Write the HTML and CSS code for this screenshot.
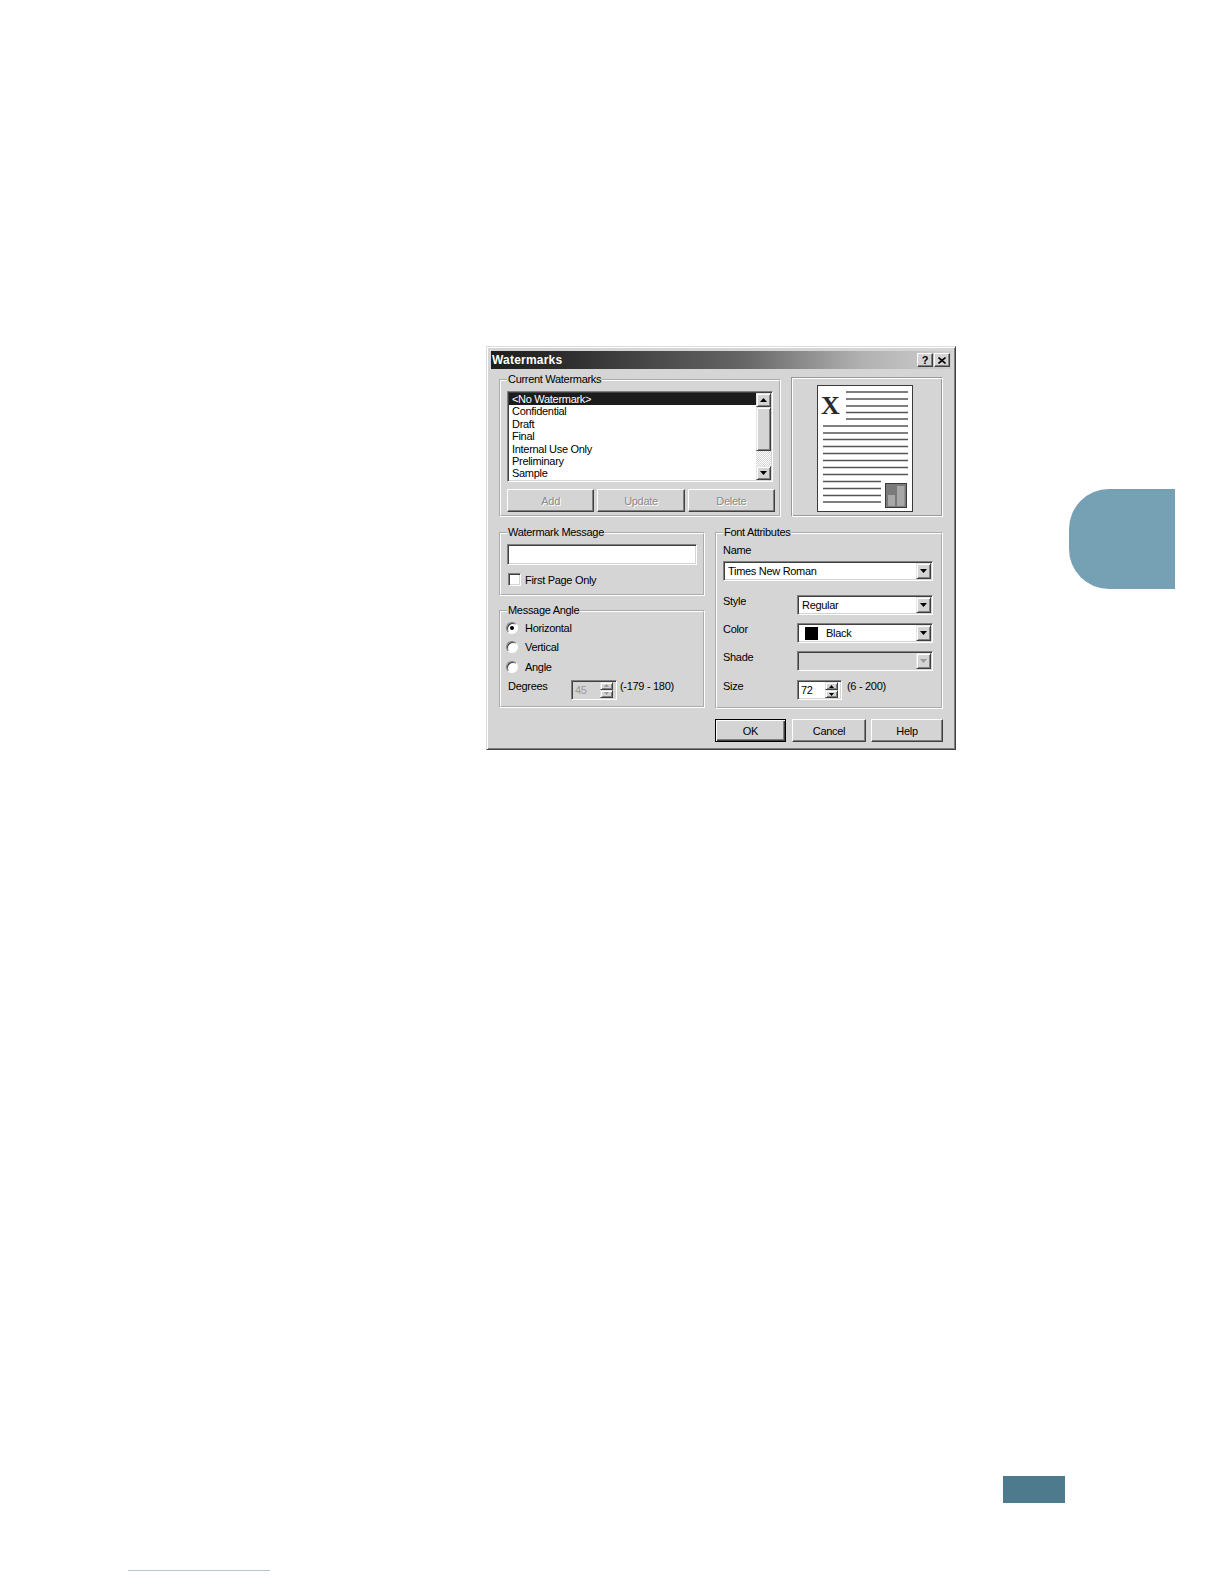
FILE: index.html
```html
<!DOCTYPE html>
<html lang="en">
<head>
  <meta charset="UTF-8">
  <title>Watermarks</title>
  <link rel="stylesheet" href="styles.css">
</head>
<body>
<div class="page">

  <div class="top-row">
    <!-- Watermarks dialog -->
    <div class="dialog">
      <div class="titlebar">
        <span class="title">Watermarks</span>
        <div class="title-btns">
          <span class="tbtn">?</span>
          <span class="tbtn"><svg width="8" height="7" viewBox="0 0 8 7"><path d="M0.5 0.5L7.5 6.5M7.5 0.5L0.5 6.5" stroke="#000" stroke-width="1.6"/></svg></span>
        </div>
      </div>

      <div class="dlg-body">
        <div class="row-one">
          <fieldset class="grp grp-current">
            <legend>Current Watermarks</legend>
            <div class="listbox">
              <ul class="items">
                <li class="sel">&lt;No Watermark&gt;</li>
                <li>Confidential</li>
                <li>Draft</li>
                <li>Final</li>
                <li>Internal Use Only</li>
                <li>Preliminary</li>
                <li>Sample</li>
              </ul>
              <div class="vscroll">
                <div class="sbtn"><svg width="7" height="4" viewBox="0 0 7 4"><path d="M3.5 0L7 4H0z"/></svg></div>
                <div class="thumb"></div>
                <div class="track"></div>
                <div class="sbtn"><svg width="7" height="4" viewBox="0 0 7 4"><path d="M0 0h7L3.5 4z"/></svg></div>
              </div>
            </div>
            <div class="btn-row">
              <div class="btn disabled">Add</div>
              <div class="btn disabled">Update</div>
              <div class="btn disabled">Delete</div>
            </div>
          </fieldset>

          <div class="preview">
            <div class="paper">
              <svg width="94" height="125" viewBox="0 0 94 125">
                <text x="3" y="28" font-family="Liberation Serif" font-weight="bold" font-size="26" fill="#2a2a2a">X</text>
                <g stroke="#555" stroke-width="1.4">
                  <path d="M28 6H90M28 13H90M28 20H90M28 26.5H90M28 33H90"/>
                  <path d="M5 40H90M5 47H90M5 53.5H90M5 60.5H90M5 67.5H90M5 74.5H90M5 81.5H90M5 88.5H90"/>
                  <path d="M5 95.5H63M5 102.5H63M5 109.5H63M5 116H63"/>
                </g>
                <rect x="67.5" y="97.5" width="21" height="24" fill="#7a7a7a" stroke="#3a3a3a"/>
                <rect x="70" y="109" width="7" height="11" fill="#a8a8a8"/>
                <rect x="79" y="100" width="7.5" height="20" fill="#a8a8a8"/>
              </svg>
            </div>
          </div>
        </div>

        <div class="row-two">
          <div class="col-left">
            <fieldset class="grp grp-msg">
              <legend>Watermark Message</legend>
              <div class="field msg-input"></div>
              <div class="check-row">
                <span class="checkbox"></span>
                <span>First Page Only</span>
              </div>
            </fieldset>

            <fieldset class="grp grp-angle">
              <legend>Message Angle</legend>
              <div class="radio-row"><span class="radio on"></span><span>Horizontal</span></div>
              <div class="radio-row"><span class="radio"></span><span>Vertical</span></div>
              <div class="radio-row"><span class="radio"></span><span>Angle</span></div>
              <div class="deg-row">
                <span class="deg-label">Degrees</span>
                <div class="field spin spin-off">
                  <span class="spin-val">45</span>
                  <div class="spin-btns">
                    <div class="spin-btn"><svg width="5" height="3" viewBox="0 0 5 3"><path d="M2.5 0L5 3H0z"/></svg></div>
                    <div class="spin-btn"><svg width="5" height="3" viewBox="0 0 5 3"><path d="M0 0h5L2.5 3z"/></svg></div>
                  </div>
                </div>
                <span class="range">(-179 - 180)</span>
              </div>
            </fieldset>
          </div>

          <fieldset class="grp grp-font">
            <legend>Font Attributes</legend>
            <div class="name-label">Name</div>
            <div class="field combo combo-name">
              <span class="combo-text">Times New Roman</span>
              <div class="drop"><svg width="7" height="4" viewBox="0 0 7 4"><path d="M0 0h7L3.5 4z"/></svg></div>
            </div>
            <div class="fa-row first">
              <span class="fa-label">Style</span>
              <div class="field combo">
                <span class="combo-text">Regular</span>
                <div class="drop"><svg width="7" height="4" viewBox="0 0 7 4"><path d="M0 0h7L3.5 4z"/></svg></div>
              </div>
            </div>
            <div class="fa-row">
              <span class="fa-label">Color</span>
              <div class="field combo">
                <span class="combo-text color-text"><span class="swatch"></span>Black</span>
                <div class="drop"><svg width="7" height="4" viewBox="0 0 7 4"><path d="M0 0h7L3.5 4z"/></svg></div>
              </div>
            </div>
            <div class="fa-row">
              <span class="fa-label">Shade</span>
              <div class="field combo combo-off">
                <span class="combo-text"></span>
                <div class="drop"><svg width="7" height="4" viewBox="0 0 7 4"><path d="M0 0h7L3.5 4z"/></svg></div>
              </div>
            </div>
            <div class="fa-row size-row">
              <span class="fa-label">Size</span>
              <div class="field spin spin-size">
                <span class="spin-val">72</span>
                <div class="spin-btns">
                  <div class="spin-btn"><svg width="5" height="3" viewBox="0 0 5 3"><path d="M2.5 0L5 3H0z"/></svg></div>
                  <div class="spin-btn"><svg width="5" height="3" viewBox="0 0 5 3"><path d="M0 0h5L2.5 3z"/></svg></div>
                </div>
              </div>
              <span class="range size-range">(6 - 200)</span>
            </div>
          </fieldset>
        </div>

        <div class="dlg-buttons">
          <div class="btn btn-default btn-ok">OK</div>
          <div class="btn btn-cancel">Cancel</div>
          <div class="btn btn-help">Help</div>
        </div>
      </div>
    </div>

    <!-- chapter tab -->
    <div class="tab"></div>
  </div>

  <div class="page-num"></div>
  <div class="footline"></div>
</div>
</body>
</html>
```

FILE: styles.css
```css
body {
  margin: 0;
  background: #fff;
  font-family: "Liberation Sans", Arial, sans-serif;
}
.page {
  padding-top: 346px;
}
.top-row {
  display: flex;
  align-items: flex-start;
}

/* dialog frame */
.dialog {
  margin-left: 486px;
  width: 470px;
  height: 404px;
  box-sizing: border-box;
  padding: 4px;
  background: #d5d5d5;
  border: 1px solid;
  border-color: #dcdcdc #404040 #404040 #dcdcdc;
  box-shadow: inset 1px 1px #fff, inset -1px -1px #808080;
  font-size: 11px;
  letter-spacing: -0.3px;
  color: #000;
}
.titlebar {
  height: 18px;
  display: flex;
  align-items: center;
  justify-content: space-between;
  padding: 0 1px 0 1px;
  background: linear-gradient(90deg, #1e1e1e 0%, #2c2c2c 15%, #666 55%, #b0b0b0 80%, #cdcdcd 100%);
}
.title {
  color: #fff;
  font-weight: bold;
  font-size: 12px;
  letter-spacing: 0.2px;
}
.title-btns {
  display: flex;
  gap: 1px;
}
.tbtn {
  width: 16px;
  height: 14px;
  box-sizing: border-box;
  display: flex;
  align-items: center;
  justify-content: center;
  background: #d4d4d4;
  border: 1px solid;
  border-color: #fff #404040 #404040 #fff;
  box-shadow: inset -1px -1px #808080;
  font-weight: bold;
  font-size: 11px;
  letter-spacing: 0;
}

.dlg-body {
  padding: 4px 8px 0 8px;
}
.row-one {
  display: flex;
  align-items: flex-end;
  gap: 10px;
}
.row-two {
  display: flex;
  align-items: flex-start;
  gap: 10px;
  margin-top: 9px;
}
.col-left {
  width: 206px;
  display: flex;
  flex-direction: column;
  gap: 8px;
}

/* group boxes */
.grp {
  margin: 0;
  min-width: 0;
  box-sizing: border-box;
  border: 2px groove #fff;
}
.grp legend {
  padding: 0 1px;
  margin: 0;
  line-height: 13px;
  font-size: 11px;
}
.grp-current {
  width: 283px;
  height: 144px;
  padding: 5px 5px 3px 6px;
}
.grp-msg {
  height: 70px;
  padding: 5px 6px 0 6px;
}
.grp-angle {
  height: 104px;
  padding: 1px 6px 0 6px;
}
.grp-font {
  width: 228px;
  height: 183px;
  padding: 5px 8px 0 6px;
}

/* sunken field */
.field {
  box-sizing: border-box;
  background: #fff;
  border: 1px solid;
  border-color: #808080 #fff #fff #808080;
  box-shadow: inset 1px 1px #404040, inset -1px -1px #d4d4d4;
}

/* list box */
.listbox {
  width: 266px;
  height: 91px;
  box-sizing: border-box;
  display: flex;
  padding: 1px;
  background: #fff;
  border: 1px solid;
  border-color: #808080 #fff #fff #808080;
  box-shadow: inset 1px 1px #404040, inset -1px -1px #d4d4d4;
}
.items {
  flex: 1;
  list-style: none;
  margin: 0;
  padding: 0;
  overflow: hidden;
}
.items li {
  height: 12.4px;
  line-height: 12.4px;
  padding-left: 3px;
  white-space: nowrap;
}
.items li.sel {
  background: #1c1c1c;
  color: #fff;
}
.vscroll {
  width: 15px;
  display: flex;
  flex-direction: column;
}
.sbtn, .thumb, .drop, .spin-btn {
  box-sizing: border-box;
  background: #d4d4d4;
  border: 1px solid;
  border-color: #e4e4e4 #404040 #404040 #e4e4e4;
  box-shadow: inset 1px 1px #fff, inset -1px -1px #808080;
  display: flex;
  align-items: center;
  justify-content: center;
}
.sbtn {
  height: 14px;
}
.thumb {
  height: 44px;
}
.track {
  flex: 1;
  background: repeating-conic-gradient(#fff 0 25%, #d4d4d4 0 50%) 0 0 / 2px 2px;
}

/* push buttons */
.btn-row {
  width: 268px;
  display: flex;
  gap: 3px;
  margin-top: 7px;
}
.btn {
  height: 23px;
  box-sizing: border-box;
  display: flex;
  align-items: center;
  justify-content: center;
  background: #d4d4d4;
  border: 1px solid;
  border-color: #fff #404040 #404040 #fff;
  box-shadow: inset -1px -1px #808080;
}
.btn-row .btn {
  flex: 1;
}
.btn.disabled {
  color: #8a8a8a;
  text-shadow: 1px 1px #fff;
}

/* preview */
.preview {
  width: 152px;
  height: 140px;
  box-sizing: border-box;
  border: 1px solid;
  border-color: #999 #fff #fff #999;
  box-shadow: inset 1px 1px #fff, inset -1px -1px #999;
}
.paper {
  width: 96px;
  height: 127px;
  margin: 7px 0 0 25px;
  box-sizing: border-box;
  background: #fff;
  border: 1px solid #3a3a3a;
}
.paper svg {
  display: block;
}

/* watermark message */
.msg-input {
  width: 190px;
  height: 21px;
}
.check-row {
  display: flex;
  align-items: center;
  gap: 4px;
  margin-top: 8px;
  margin-left: 1px;
}
.checkbox {
  width: 13px;
  height: 13px;
  box-sizing: border-box;
  background: #fff;
  border: 1px solid;
  border-color: #808080 #fff #fff #808080;
  box-shadow: inset 1px 1px #404040, inset -1px -1px #d4d4d4;
}

/* message angle */
.radio-row {
  height: 19.5px;
  display: flex;
  align-items: center;
  gap: 7px;
  margin-left: -1px;
}
.radio {
  width: 12px;
  height: 12px;
  box-sizing: border-box;
  border-radius: 50%;
  background: #fff;
  border: 1px solid;
  border-color: #808080 #fff #fff #808080;
  box-shadow: inset 1px 1px #404040;
  display: flex;
  align-items: center;
  justify-content: center;
}
.radio.on::after {
  content: "";
  width: 4px;
  height: 4px;
  border-radius: 50%;
  background: #000;
}
.deg-row {
  display: flex;
  align-items: flex-start;
  margin-top: 3px;
}
.deg-label {
  width: 63px;
  margin-left: 1px;
  line-height: 13px;
}
.range {
  line-height: 13px;
  margin-left: 3px;
  white-space: nowrap;
}

/* spin boxes */
.spin {
  display: flex;
  align-items: stretch;
  padding: 1px 3px 1px 1px;
}
.spin-off {
  width: 46px;
  height: 20px;
  background: #d4d4d4;
}
.spin-val {
  flex: 1;
  padding-left: 2px;
  line-height: 16px;
}
.spin-off .spin-val {
  color: #9a9a9a;
}
.spin-btns {
  width: 13px;
  display: flex;
  flex-direction: column;
}
.spin-btn {
  flex: 1;
}
.spin-off .spin-btn svg {
  fill: #9a9a9a;
}
.spin-size {
  width: 45px;
  height: 20px;
}
.spin-size .spin-val {
  padding-left: 2px;
}

/* font attributes */
.name-label {
  line-height: 13px;
}
.combo {
  height: 20px;
  display: flex;
  align-items: stretch;
  padding: 1px;
}
.combo-name {
  width: 210px;
  margin-top: 4px;
}
.combo-text {
  flex: 1;
  padding-left: 3px;
  line-height: 16px;
  white-space: nowrap;
}
.drop {
  width: 15px;
}
.combo-off {
  background: #d4d4d4;
}
.combo-off .drop svg {
  fill: #9a9a9a;
}
.color-text {
  display: flex;
  align-items: center;
  padding-left: 6px;
}
.swatch {
  width: 13px;
  height: 13px;
  background: #000;
  margin-right: 8px;
}
.fa-row {
  display: flex;
  align-items: flex-start;
  margin-top: 8px;
}
.fa-row.first {
  margin-top: 14px;
}
.fa-row.size-row {
  margin-top: 9px;
}
.fa-label {
  width: 74px;
  line-height: 12px;
}
.fa-row .combo {
  width: 136px;
}
.size-range {
  margin-left: 5px;
  line-height: 12px;
}

/* bottom buttons */
.dlg-buttons {
  display: flex;
  justify-content: flex-end;
  margin-top: 10px;
}
.btn-ok {
  width: 71px;
}
.btn-cancel {
  width: 74px;
  margin-left: 6px;
}
.btn-help {
  width: 72px;
  margin-left: 5px;
}
.btn-default {
  border-color: #000;
  box-shadow: inset 1px 1px #fff, inset -1px -1px #404040, inset -2px -2px #808080;
}

/* page decorations */
.tab {
  margin-left: auto;
  margin-right: 49px;
  margin-top: 143px;
  width: 106px;
  height: 100px;
  background: #76a0b3;
  border-radius: 40px 0 0 40px;
}
.page-num {
  margin-left: 1003px;
  margin-top: 726px;
  width: 62px;
  height: 27px;
  background: #4e7a8e;
}
.footline {
  margin-left: 128px;
  margin-top: 67px;
  width: 142px;
  height: 1px;
  background: #b4c6dc;
}
```
